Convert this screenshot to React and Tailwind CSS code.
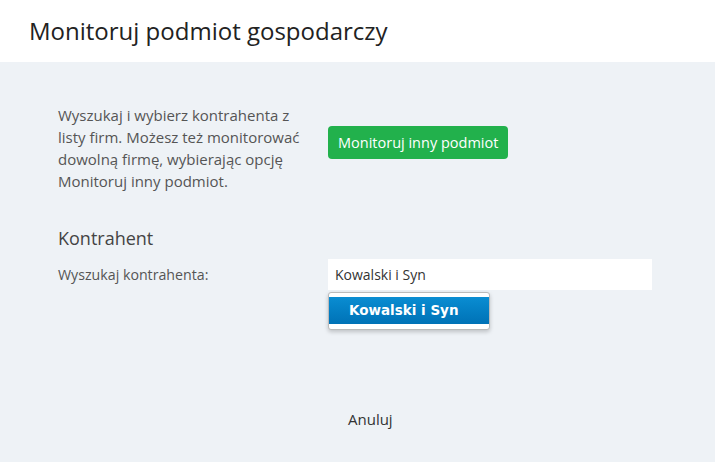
export default function App() {
  return (
    <div className="min-h-[462px] w-[715px] bg-[#eef2f6] font-['Open_Sans',sans-serif] text-[#555]">
      <header className="flex h-[62px] items-center bg-white px-[29px]">
        <h1 className="text-[24px] leading-none text-[#222]">Monitoruj podmiot gospodarczy</h1>
      </header>

      <main className="pl-[58px]">
        <div className="flex pt-[42px]">
          <p className="w-[246px] text-[15px] leading-[22px]">
            Wyszukaj i wybierz kontrahenta z listy firm. Możesz też monitorować dowolną firmę, wybierając opcję Monitoruj inny podmiot.
          </p>
          <div className="ml-[24px] pt-[22px]">
            <button className="h-[33px] rounded-[4px] bg-[#22b14c] px-[10px] text-[14.5px] text-white">
              Monitoruj inny podmiot
            </button>
          </div>
        </div>

        <h2 className="mt-[34px] text-[18px] leading-[24px] text-[#444]">Kontrahent</h2>

        <div className="mt-[9px] flex">
          <label className="w-[270px] pt-[6px] text-[14.2px] leading-[20px]">Wyszukaj kontrahenta:</label>
          <div className="relative">
            <div className="flex h-[31px] w-[324px] items-center bg-white px-[7px] text-[14px] text-[#333]">
              Kowalski i Syn
            </div>
            <div className="absolute left-0 top-[33px] w-[162px] rounded-[3px] border border-[#bbb] bg-white pt-[4px] pb-[5px] shadow-[0_2px_4px_rgba(0,0,0,0.2)]">
              <div className="flex h-[27px] items-center bg-gradient-to-b from-[#0a8dd2] to-[#0072b6] pl-[20px] font-['DejaVu_Sans',sans-serif] text-[13.5px] font-bold text-white">
                Kowalski i Syn
              </div>
            </div>
          </div>
        </div>

        <div className="mt-[119px] pl-[290px] text-[15px] leading-[20px] text-[#333]">Anuluj</div>
      </main>
    </div>
  );
}
